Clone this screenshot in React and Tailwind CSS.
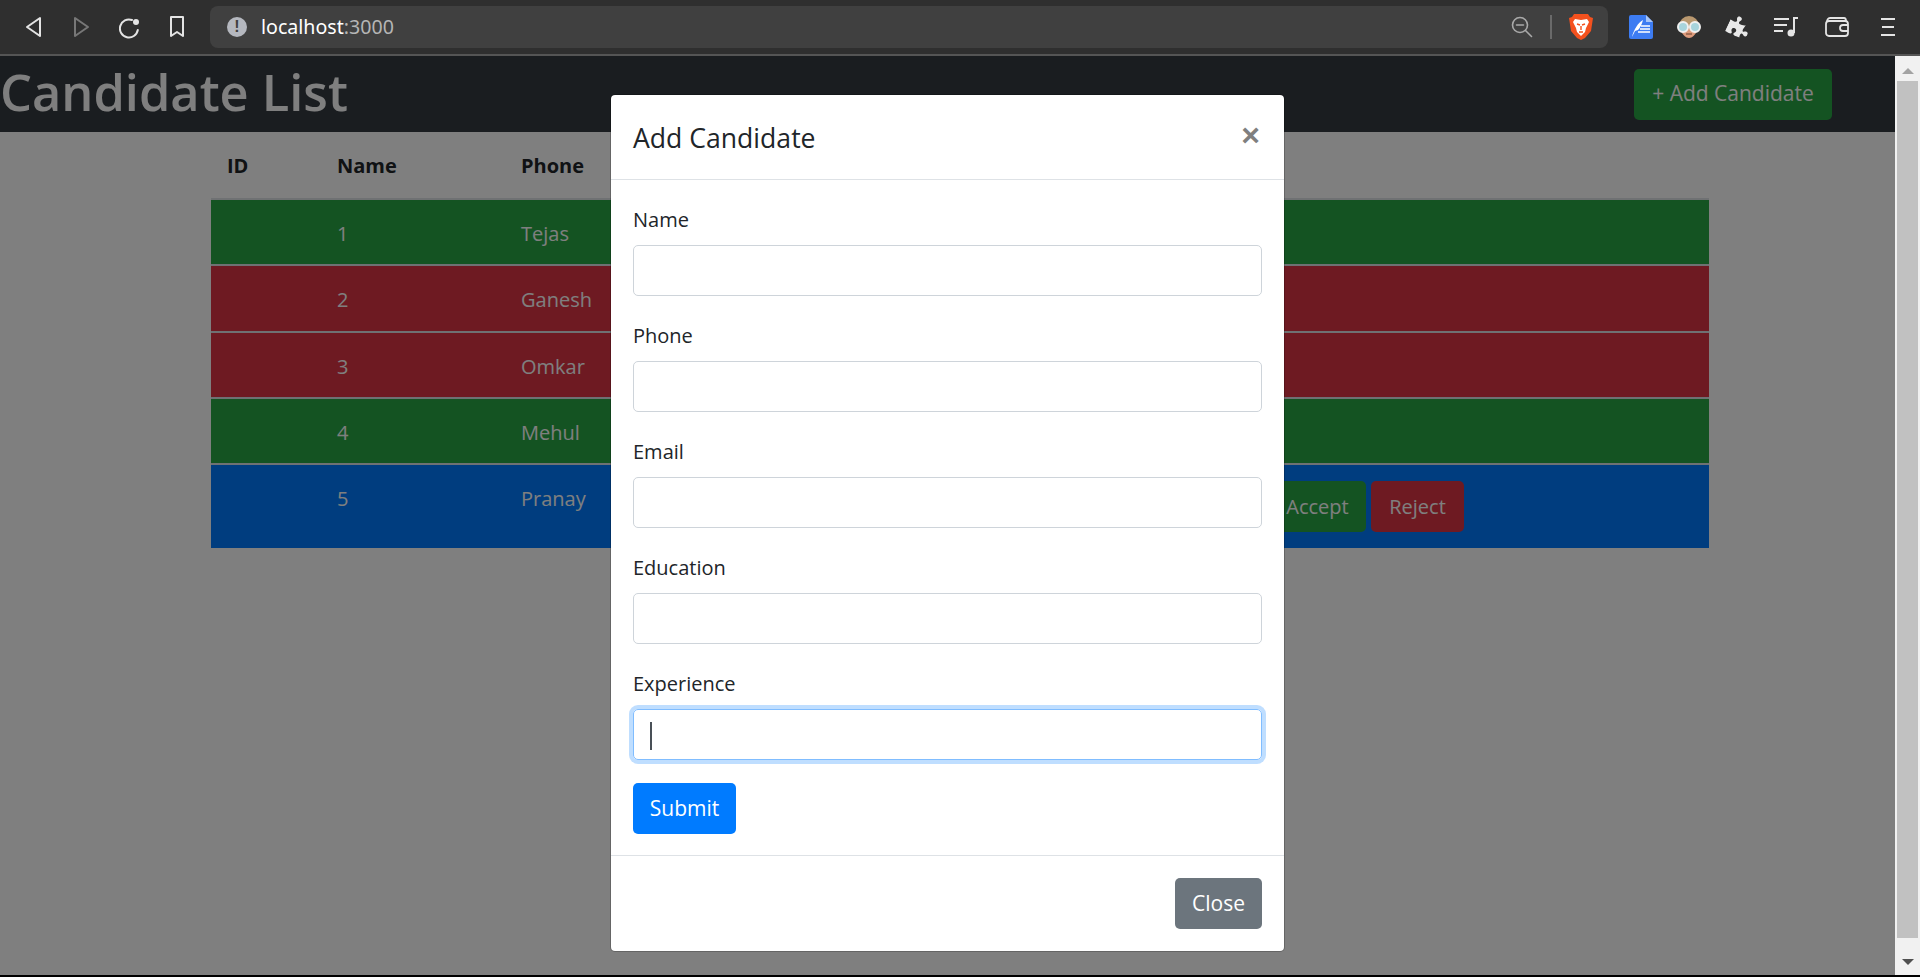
import { useState } from 'react';
import { FaPuzzlePiece } from 'react-icons/fa';

const rows = [
  { id: 1, name: 'Tejas', color: 'bg-[#28a745]' },
  { id: 2, name: 'Ganesh', color: 'bg-[#dc3545]' },
  { id: 3, name: 'Omkar', color: 'bg-[#dc3545]' },
  { id: 4, name: 'Mehul', color: 'bg-[#28a745]' },
  { id: 5, name: 'Pranay', color: 'bg-[#007bff]', pending: true },
];

const fields = ['Name', 'Phone', 'Email', 'Education', 'Experience'];

function BrowserBar() {
  return (
    <div className="flex h-[56px] shrink-0 items-center border-b-2 border-[#555555] bg-[#2f2f2f] pl-[23px] text-[#e4e4e4]">
      {/* back / forward / reload / bookmark */}
      <svg width="20" height="24" viewBox="0 0 20 24" fill="none" stroke="currentColor" strokeWidth="2" strokeLinejoin="round" className="mr-[29px]">
        <path d="M17 3v18L4 12z" />
      </svg>
      <svg width="20" height="24" viewBox="0 0 20 24" fill="none" stroke="#777777" strokeWidth="2" strokeLinejoin="round" className="mr-[27px]">
        <path d="M3 3v18l13-9z" />
      </svg>
      <svg width="20" height="24" viewBox="0 0 20 24" fill="none" stroke="currentColor" strokeWidth="2" strokeLinecap="round" className="mr-[29px]">
        <path d="M13 5A9 9 0 1 0 18.8 15" />
        <circle cx="17" cy="7" r="3" fill="currentColor" stroke="none" />
      </svg>
      <svg width="18" height="24" viewBox="0 0 18 24" fill="none" stroke="currentColor" strokeWidth="2" strokeLinejoin="round" className="mr-[24px]">
        <path d="M3 2h12v19l-6-4-6 4z" />
      </svg>

      <div className="flex h-[42px] w-[1398px] items-center rounded-lg bg-[#404040] pl-[17px] pr-[15px]">
        <div className="flex h-[20px] w-[20px] items-center justify-center rounded-full bg-[#b5b8bf] font-['Liberation_Sans',sans-serif] text-[16px] font-bold text-[#404040]">!</div>
        <span className="ml-[14px] font-['Noto_Sans',sans-serif] text-[19.6px] text-white">
          localhost<span className="text-[#b5b5b5]">:3000</span>
        </span>
        <svg width="22" height="22" viewBox="0 0 22 22" fill="none" stroke="#a9a9a9" strokeWidth="1.6" strokeLinecap="round" className="ml-auto">
          <circle cx="9" cy="9" r="7.5" />
          <path d="M5.5 9h7M14.5 14.5l6 6" />
        </svg>
        <div className="ml-[17px] h-[24px] w-[2px] bg-[#6a6a6a]" />
        <svg width="24" height="28" viewBox="0 0 24 28" className="ml-[17px]">
          <path d="M5 1h14l2 3 3 1-2 13-6 7-4 2-4-2-6-7L0 5l3-1z" fill="#f4511e" />
          <path d="M6 6l6 1 6-1 2 3-3 6-1 4-4 4-4-4-1-4-3-6z" fill="#ffffff" />
          <path d="M8 11l3 1M16 11l-3 1M12 13v4M10 19h4" stroke="#f4511e" strokeWidth="1.4" fill="none" />
        </svg>
      </div>

      {/* extension icons */}
      <svg width="24" height="24" viewBox="0 0 24 24" className="ml-[21px]">
        <path d="M2 0h15l7 7v15a2 2 0 0 1-2 2H2a2 2 0 0 1-2-2V2a2 2 0 0 1 2-2z" fill="#3d7cf2" />
        <path d="M17 0l7 7h-7z" fill="#a9c6f8" />
        <path d="M3 22c2-8 6-14 11-17-1 4-3 8-5 10l-3 1z" fill="#ffffff" />
        <path d="M12 11h9M11 14h10M9 17h12" stroke="#ffffff" strokeWidth="1.4" />
      </svg>
      <svg width="26" height="26" viewBox="0 0 26 26" className="ml-[23px]">
        <circle cx="13" cy="12" r="10" fill="#b9986f" />
        <path d="M5 15c1 6 5 9 8 9s7-3 8-9z" fill="#dd9b7c" />
        <path d="M10 20h6" stroke="#8c5a44" strokeWidth="1.4" />
        <circle cx="7" cy="13" r="5" fill="#a8d4dc" stroke="#f0f0f0" strokeWidth="2" />
        <circle cx="19" cy="13" r="5" fill="#a8d4dc" stroke="#f0f0f0" strokeWidth="2" />
      </svg>
      <FaPuzzlePiece size={22} color="#e8e8e8" className="ml-[26px] rotate-[25deg]" />
      <svg width="24" height="20" viewBox="0 0 24 20" fill="none" stroke="#e4e4e4" strokeWidth="2" className="ml-[24px]">
        <path d="M0 2h15M0 8h13M0 14h9" />
        <path d="M20 16V1h4" />
        <circle cx="17" cy="16" r="3.5" fill="#e4e4e4" stroke="none" />
      </svg>
      <svg width="24" height="20" viewBox="0 0 24 20" fill="none" stroke="#e4e4e4" strokeWidth="1.8" className="ml-[27px]">
        <path d="M2 5c0-2 1-4 3-4h14c1 0 2 1 2 3" />
        <rect x="1" y="4" width="22" height="15" rx="3" />
        <path d="M23 8h-5a3 3 0 0 0 0 6h5" />
      </svg>
      <svg width="14" height="20" viewBox="0 0 14 20" stroke="#e4e4e4" strokeWidth="2" className="ml-[32px]">
        <path d="M0 2h14M1 10h12M0 18h14" />
      </svg>
    </div>
  );
}

function CandidateModal() {
  const [values, setValues] = useState({});

  return (
    <div className="absolute inset-0 bg-black/50">
      <div className="absolute left-[610px] top-[38px] w-[675px] rounded-[5px] border border-black/20 bg-white bg-clip-padding text-[#212529]">
        <div className="flex h-[85px] items-center justify-between border-b border-[#dee2e6] pl-[22px] pr-[24px]">
          <h5 className="pt-[2px] text-[26.6px] font-medium leading-none">Add Candidate</h5>
          <button type="button" className="mb-[4px] font-['Liberation_Sans',sans-serif] text-[32px] font-bold leading-none text-[#7f7f7f]">×</button>
        </div>

        <form className="px-[22px] pb-[21px] pt-[25px]" onSubmit={(e) => e.preventDefault()}>
          {fields.map((field) => (
            <div key={field} className={`relative ${field === 'Experience' ? 'mb-[23px]' : 'mb-[25px]'}`}>
              <label className="mb-[10px] block leading-[30px]">{field}</label>
              <input
                type="text"
                value={values[field] || ''}
                onChange={(e) => setValues({ ...values, [field]: e.target.value })}
                className={`block h-[51px] w-full rounded-[5px] border px-[15px] outline-none ${
                  field === 'Experience'
                    ? 'border-[#80bdff] shadow-[0_0_0_4px_rgba(0,123,255,0.25)]'
                    : 'border-[#ced4da]'
                }`}
              />
              {/* caret of the focused field */}
              {field === 'Experience' && <span className="absolute bottom-[10px] left-[17px] h-[28px] w-[2px] bg-[#495057]" />}
            </div>
          ))}
          <button type="submit" className="h-[51px] w-[103px] rounded-[5px] bg-[#007bff] text-[21px] text-white">Submit</button>
        </form>

        <div className="flex justify-end border-t border-[#dee2e6] px-[22px] py-[22px]">
          <button type="button" className="h-[51px] w-[87px] rounded-[5px] bg-[#6c757d] text-[21px] text-white">Close</button>
        </div>
      </div>
    </div>
  );
}

function Scrollbar() {
  return (
    <div className="flex w-[25px] shrink-0 flex-col items-center bg-[#f1f1f1]">
      <div className="mt-[12px] h-0 w-0 border-x-[6px] border-b-[6px] border-x-transparent border-b-[#a3a3a3]" />
      <div className="mt-[7px] h-[857px] w-[21px] bg-[#c1c1c1]" />
      <div className="mt-[21px] h-0 w-0 border-x-[6px] border-t-[6px] border-x-transparent border-t-[#505050]" />
    </div>
  );
}

export default function App() {
  return (
    <div className="flex h-[977px] flex-col overflow-hidden bg-black font-['Open_Sans','Noto_Sans',sans-serif] text-[20px]">
      <BrowserBar />

      <div className="flex h-[919px] shrink-0">
        <div className="relative flex-1 overflow-hidden bg-white text-[#212529]">
          <nav className="flex h-[76px] items-center justify-between bg-[#343a40] pr-[63px]">
            <h1 className="mb-[4px] text-[50.5px] font-semibold leading-none text-white">Candidate List</h1>
            <button type="button" className="h-[51px] w-[198px] rounded-[5px] bg-[#28a745] text-[21px] text-white">+ Add Candidate</button>
          </nav>

          <div className="ml-[211px] mr-[186px]">
            <div className="flex h-[68px] items-center border-b-2 border-[#dee2e6] pl-[16px] pt-[2px] font-bold">
              <div className="w-[110px]">ID</div>
              <div className="w-[184px]">Name</div>
              <div>Phone</div>
            </div>
            {rows.map((row) => (
              <div key={row.id} className={`flex pl-[126px] pt-[19px] text-white ${row.color} ${row.pending ? 'h-[83px]' : 'h-[66.25px] border-b-2 border-[#dee2e6]'}`}>
                <div className="w-[184px]">{row.id}</div>
                <div>{row.name}</div>
                {row.pending && (
                  <div className="ml-auto mr-[245px] -mt-[3px] flex gap-[5px]">
                    <button type="button" className="h-[51px] w-[92px] rounded-[5px] bg-[#28a745] pr-[5px] text-white">Accept</button>
                    <button type="button" className="h-[51px] w-[93px] rounded-[5px] bg-[#dc3545] text-white">Reject</button>
                  </div>
                )}
              </div>
            ))}
          </div>

          <CandidateModal />
        </div>
        <Scrollbar />
      </div>
    </div>
  );
}
